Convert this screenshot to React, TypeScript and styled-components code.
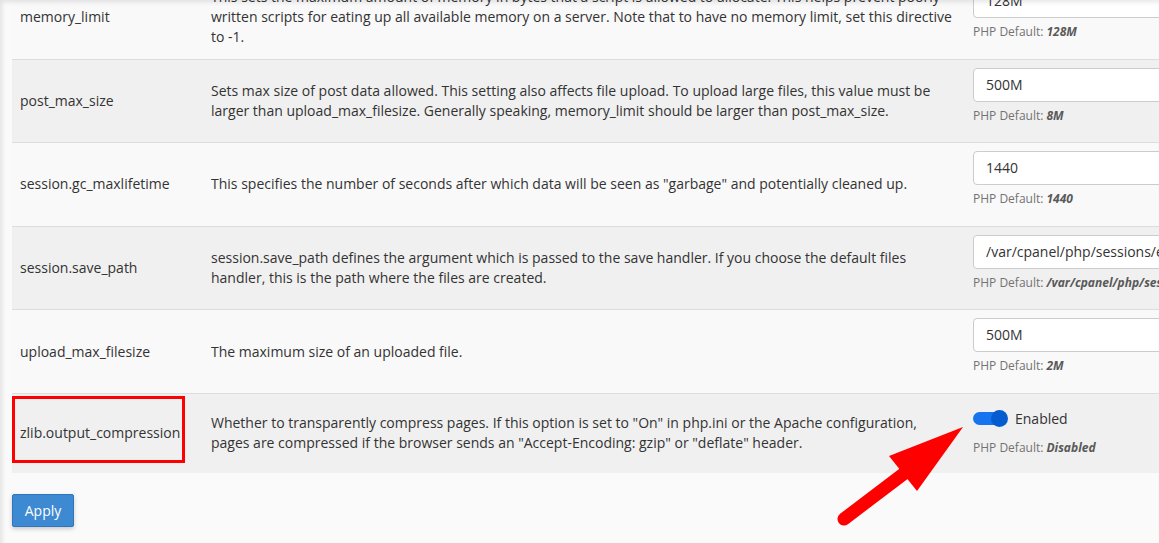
import React from "react";
import styled, { createGlobalStyle } from "styled-components";

const GlobalStyle = createGlobalStyle`
  html, body {
    margin: 0;
    padding: 0;
    background: #fafafa;
    overflow: hidden;
  }
  body {
    font-family: "Open Sans", "Liberation Sans", sans-serif;
    font-size: 14px;
    line-height: 20px;
    color: #333;
  }
`;

const Page = styled.div`
  position: relative;
  width: 1159px;
  height: 543px;
  overflow: hidden;
  background: #fafafa;
`;

const Content = styled.div`
  margin-top: -24px;
  padding-left: 12px;
  width: 1400px;
`;

const Table = styled.div`
  display: flex;
  flex-direction: column;
`;

const Row = styled.div<{ $alt?: boolean; $first?: boolean }>`
  display: grid;
  grid-template-columns: 191px 762px 1fr;
  align-items: center;
  background: ${(p) => (p.$alt ? "#f0f0f0" : "#f9f9f9")};
  border-top: ${(p) => (p.$first ? "none" : "1px solid #dddddd")};
`;

const NameCell = styled.div`
  padding: 8px;
  color: #333;
  white-space: nowrap;
`;

const DescCell = styled.div`
  padding: 8px 10px 8px 8px;
  color: #333;
`;

const ValueCell = styled.div`
  padding: 8px;
`;

const TextInput = styled.div`
  box-sizing: border-box;
  height: 34px;
  width: 400px;
  padding: 6px 12px;
  background: #fff;
  border: 1px solid #cccccc;
  border-radius: 4px;
  color: #333;
  font-size: 14px;
  line-height: 20px;
  white-space: nowrap;
  overflow: hidden;
`;

const Help = styled.div<{ $tight?: boolean }>`
  margin: ${(p) => (p.$tight ? "5px 0 8px" : "5px 0 10px")};
  font-size: 12px;
  line-height: 17.6px;
  color: #737373;
  white-space: nowrap;
`;

const HelpValue = styled.span`
  font-weight: 700;
  font-style: italic;
  color: #595959;
`;

const ToggleLine = styled.div`
  display: flex;
  align-items: center;
  height: 30px;
  margin-top: 2px;
  gap: 7px;
`;

const Track = styled.div`
  position: relative;
  width: 35px;
  height: 16px;
  display: flex;
  align-items: center;
  justify-content: flex-end;
`;

const TrackBar = styled.div`
  width: 33px;
  height: 13px;
  border-radius: 7px;
  background: #1773f0;
  margin-right: 2px;
`;

const Knob = styled.div`
  position: absolute;
  right: 0;
  top: -1px;
  width: 17px;
  height: 17px;
  border-radius: 50%;
  background: #055cd0;
`;

const ToggleLabel = styled.span`
  font-size: 14px;
  color: #333;
`;

const Footer = styled.div`
  padding: 21px 0 0;
`;

const ApplyButton = styled.button`
  box-sizing: border-box;
  height: 33px;
  width: 62px;
  padding: 0;
  font-family: "Open Sans", "Liberation Sans", sans-serif;
  font-size: 14px;
  color: #fff;
  background: #3d89d2;
  border: 1px solid #2f76bb;
  border-radius: 2px;
  box-shadow: 0 2px 4px rgba(0, 0, 0, 0.2);
`;

const EdgeShadow = styled.div`
  position: absolute;
  inset: 0;
  pointer-events: none;
  box-shadow: inset 3px 3px 5px -1px rgba(0, 0, 0, 0.1);
`;

const Highlight = styled.div`
  position: absolute;
  left: 12px;
  top: 396px;
  width: 173px;
  height: 67px;
  box-sizing: border-box;
  border: 3px solid #ff0000;
  pointer-events: none;
`;

const ArrowSvg = styled.svg`
  position: absolute;
  left: 0;
  top: 0;
  pointer-events: none;
`;

type Setting = {
  name: string;
  desc: string;
  value?: string;
  def: string;
  toggle?: boolean;
};

const settings: Setting[] = [
  {
    name: "memory_limit",
    desc:
      "This sets the maximum amount of memory in bytes that a script is allowed to allocate. This helps prevent poorly written scripts for eating up all available memory on a server. Note that to have no memory limit, set this directive to -1.",
    value: "128M",
    def: "128M",
  },
  {
    name: "post_max_size",
    desc:
      "Sets max size of post data allowed. This setting also affects file upload. To upload large files, this value must be larger than upload_max_filesize. Generally speaking, memory_limit should be larger than post_max_size.",
    value: "500M",
    def: "8M",
  },
  {
    name: "session.gc_maxlifetime",
    desc:
      'This specifies the number of seconds after which data will be seen as "garbage" and potentially cleaned up.',
    value: "1440",
    def: "1440",
  },
  {
    name: "session.save_path",
    desc:
      "session.save_path defines the argument which is passed to the save handler. If you choose the default files handler, this is the path where the files are created.",
    value: "/var/cpanel/php/sessions/ea-php74",
    def: "/var/cpanel/php/sessions/ea-php74",
  },
  {
    name: "upload_max_filesize",
    desc: "The maximum size of an uploaded file.",
    value: "500M",
    def: "2M",
  },
  {
    name: "zlib.output_compression",
    desc:
      'Whether to transparently compress pages. If this option is set to "On" in php.ini or the Apache configuration, pages are compressed if the browser sends an "Accept-Encoding: gzip" or "deflate" header.',
    def: "Disabled",
    toggle: true,
  },
];

export default function App() {
  return (
    <>
      <GlobalStyle />
      <Page>
        <Content>
          <Table>
            {settings.map((s, i) => (
              <Row key={s.name} $alt={i % 2 === 1} $first={i === 0}>
                <NameCell>{s.name}</NameCell>
                <DescCell>{s.desc}</DescCell>
                <ValueCell>
                  {s.toggle ? (
                    <ToggleLine>
                      <Track>
                        <TrackBar />
                        <Knob />
                      </Track>
                      <ToggleLabel>Enabled</ToggleLabel>
                    </ToggleLine>
                  ) : (
                    <TextInput>{s.value}</TextInput>
                  )}
                  <Help $tight={s.toggle}>
                    PHP Default: <HelpValue>{s.def}</HelpValue>
                  </Help>
                </ValueCell>
              </Row>
            ))}
          </Table>
          <Footer>
            <ApplyButton>Apply</ApplyButton>
          </Footer>
        </Content>
        <EdgeShadow />
        <Highlight />
        <ArrowSvg width="1159" height="543" viewBox="0 0 1159 543">
          <line
            x1="844"
            y1="519"
            x2="906"
            y2="472"
            stroke="#ff0000"
            strokeWidth="13"
            strokeLinecap="round"
          />
          <polygon points="963,427 889,456 917,491" fill="#ff0000" />
        </ArrowSvg>
      </Page>
    </>
  );
}
